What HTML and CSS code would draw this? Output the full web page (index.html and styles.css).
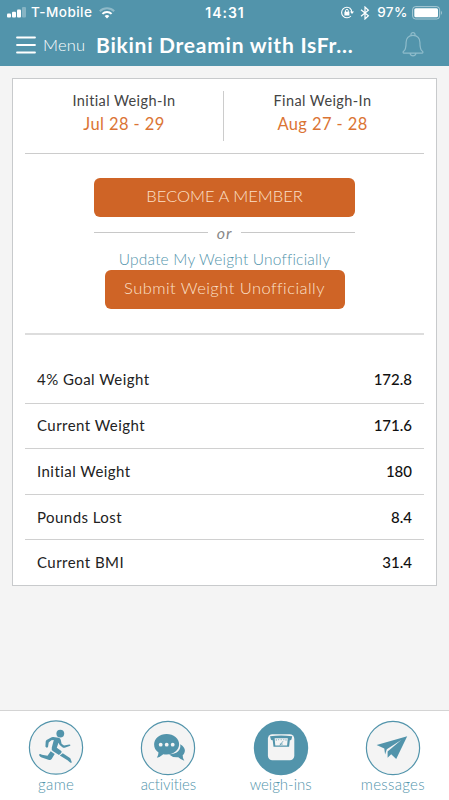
FILE: index.html
```html
<!DOCTYPE html>
<html lang="en">
<head>
<meta charset="utf-8">
<title>Weigh-ins</title>
<link rel="stylesheet" href="styles.css">
</head>
<body>
<header class="header">
  <div class="status">
    <div class="status-left">
      <svg class="signal" width="20" height="11" viewBox="0 0 20 11" fill="#fff"><rect x="0" y="6.5" width="4" height="4" rx="1"/><rect x="5" y="4.8" width="4" height="5.7" rx="1"/><rect x="10" y="2.5" width="4" height="8" rx="1"/><rect x="15" y="0" width="4" height="10.5" rx="1" opacity=".3"/></svg>
      <span class="carrier">T-Mobile</span>
      <svg class="wifi" width="16" height="12" viewBox="0 0 16 12" fill="none" stroke="#fff" stroke-width="2"><path d="M.8 4.2a10.2 10.2 0 0 1 14.4 0" opacity=".35"/><path d="M3.4 6.900a6.500 6.500 0 0 1 9.200 0"/><path d="M5.600 9.100a3.400 3.400 0 0 1 4.800 0L8 11.500z" fill="#fff" stroke="none"/></svg>
    </div>
    <span class="clock">14:31</span>
    <div class="status-right">
      <svg class="lock" width="14" height="13" viewBox="0 0 14 13" fill="none" stroke="#fff"><path d="M10.700 2.800a5.300 5.300 0 1 0 .2 7.200M9.700 2A5.300 5.300 0 0 1 11.800 6" stroke-width="1.100"/><path d="M10 5.500h4l-2 2.400z" fill="#fff" stroke="none"/><rect x="4.400" y="5.700" width="5" height="3.800" fill="#fff" stroke="none"/><path d="M5.500 6V4.800a1.400 1.400 0 0 1 2.800 0V6"/></svg>
      <svg class="bluetooth" width="10" height="14" viewBox="0 0 10 14" fill="none" stroke="#fff" stroke-width="1.200"><path d="M1 3.800l7.400 6L5 13V1l3.400 3.200L1 10.200"/></svg>
      <span class="percent">97%</span>
      <svg class="battery" width="31" height="14" viewBox="0 0 31 14"><rect x=".6" y=".6" width="27" height="12.400" rx="3" fill="none" stroke="#fff" opacity=".5"/><rect x="2.300" y="2.300" width="23.700" height="9" rx="1.500" fill="#fff"/><path d="M28.900 4.500q2 2.300 0 4.600z" fill="#fff" opacity=".5"/></svg>
    </div>
  </div>
  <div class="navbar">
    <svg class="burger" width="20" height="18" viewBox="0 0 20 18" stroke="#fff" stroke-width="1.800" stroke-linecap="round"><path d="M1 1.500h18M1 9h18M1 16.500h18"/></svg>
    <span class="menu">Menu</span>
    <h1 class="title">Bikini Dreamin with IsFr...</h1>
    <svg class="bell" width="22" height="26" viewBox="0 0 22 26" fill="none" stroke="#8fbccb" stroke-width="1.200"><path d="M9 3.800V2.600a2 2 0 0 1 4 0v1.200M11 3.400C6.500 3.400 4.100 6.400 4.100 10.200c0 5.500-.5 7.800-2.500 9-.8.6-.7 1.900.4 1.900h18c1.100 0 1.200-1.300.4-1.900-2-1.200-2.500-3.500-2.500-9 0-3.800-2.400-6.800-6.900-6.800zM8 21.400c.8 3.400 5.200 3.400 6 0"/></svg>
  </div>
</header>

<main class="card">
  <section class="dates">
    <div class="date">
      <div class="date-label">Initial Weigh-In</div>
      <div class="date-value">Jul 28 - 29</div>
    </div>
    <div class="date">
      <div class="date-label">Final Weigh-In</div>
      <div class="date-value">Aug 27 - 28</div>
    </div>
  </section>
  <section class="actions">
    <div class="button member">BECOME A MEMBER</div>
    <div class="or"><span>or</span></div>
    <div class="link">Update My Weight Unofficially</div>
    <div class="button submit">Submit Weight Unofficially</div>
  </section>
  <section class="stats">
    <div class="row"><span>4% Goal Weight</span><span class="value">172.8</span></div>
    <div class="row"><span>Current Weight</span><span class="value">171.6</span></div>
    <div class="row"><span>Initial Weight</span><span class="value">180</span></div>
    <div class="row"><span>Pounds Lost</span><span class="value">8.4</span></div>
    <div class="row"><span>Current BMI</span><span class="value">31.4</span></div>
  </section>
</main>

<nav class="tabs">
  <div class="tab game">
    <svg width="56" height="56" viewBox="0 0 56 56"><circle cx="28" cy="27.500" r="26.600" fill="#f4f4f4" stroke="#5294ab" stroke-width="1.200"/><g fill="#5294ab"><circle cx="32.300" cy="13.600" r="3.900"/><path d="M22.700 17.800q1-.9 2.500-.8l5.300.8q2 .5 2.300 2.200l.8 3.700 2.400 1.800 5.300-1q1.400.1 1 1.300l-5.600 1.900q-1.200.3-2.300-.5l-2.700-2.200-1.200-2.200-1.700 5 4.200 2.900q1.300 1 .2 2.300l-2.200 1.900-5.900-3.700q-2-1.300-1.300-3.700l2-7.400-2.400.1-2.700 2.400-.7 4.500q-1.500 1.300-2.600-.5l.3-5q.1-1 .9-1.700z"/><path d="M22.700 31.200l4 2.900-2.900 4.700q-.9 1.500-2.700 1.100l-7.400-2.400q-3.300-1.800-2.400-3.300.9-.8 2.600.5l5.600 1.100zM31.800 35.400l3-2.200 7.500 5.100 1.500 4q-.6.900-1.700.2l-2.600-2.200z"/></g></svg>
    <span class="tab-label">game</span>
  </div>
  <div class="tab activities">
    <svg width="56" height="56" viewBox="0 0 56 56"><circle cx="28" cy="28" r="26.600" fill="#f4f4f4" stroke="#5294ab" stroke-width="1.200"/><path d="M40.200 24.300c7 4 4.700 9.300 2.500 10.900q-.2 2.700 1.600 5.600-3.100-.8-6-3.500-5.600.5-9.200-2.900c7.500-.2 12.300-4.100 11.100-10.100z" fill="#5294ab"/><path d="M26.600 14c7 0 12.500 4.500 12.500 10.300s-5.500 10.300-12.500 10.300q-1.700 0-3.300-.3-3.100 2.800-6.400 3.500 1.500-2.400 1.600-5.300c-3-1.900-4.400-4.900-4.400-8.200C14.100 18.500 19.600 14 26.600 14z" fill="#5294ab"/><g fill="#f4f4f4"><circle cx="20.700" cy="24.700" r="1.900"/><circle cx="26.700" cy="24.700" r="1.900"/><circle cx="32.700" cy="24.700" r="1.900"/></g></svg>
    <span class="tab-label">activities</span>
  </div>
  <div class="tab weigh">
    <svg width="56" height="56" viewBox="0 0 56 56"><circle cx="28" cy="28" r="27.200" fill="#5294ab"/><rect x="14.900" y="14.300" width="26.400" height="26" rx="4.500" fill="#f4f4f4"/><path d="M17 16.300q11-1.400 22.200 0l-.7 3q-.3 1.200-1.700 1l-.7 6.500H20.500l-.8-6.500q-1.500.2-1.900-1z" fill="#5294ab"/><path d="M21.600 18.200h13.200l-.7 7.400H22.300z" fill="#f4f4f4"/><path d="M23.300 19.200v1.500M25.600 19.200v1M28.200 19.200v1M30.800 19.200v1M33 19.200v1.500M26.800 25.400l3.200-4.200M26.800 24.100h3" stroke="#5294ab" stroke-width=".7"/></svg>
    <span class="tab-label">weigh-ins</span>
  </div>
  <div class="tab messages">
    <svg width="56" height="56" viewBox="0 0 56 56"><circle cx="28" cy="28" r="26.600" fill="#f4f4f4" stroke="#5294ab" stroke-width="1.200"/><path d="M42.200 16.200L11.600 24.900l7.700 3.500.8 6.200 1.700-5.300L36.200 20 22.600 31.600v6.100l3.600-3.400 5 4.800z" fill="#5294ab"/></svg>
    <span class="tab-label">messages</span>
  </div>
</nav>
</body>
</html>
```

FILE: styles.css
```css
* { box-sizing: border-box; }

body {
  margin: 0;
  height: 800px;
  display: flex;
  flex-direction: column;
  background: #f4f4f4;
  font-family: Lato, sans-serif;
  font-weight: 400;
  font-variant-ligatures: none;
  color: #222;
  overflow: hidden;
  white-space: nowrap;
}

svg { display: block; flex: none; }

.header {
  height: 66px;
  background: #5294ab;
  color: #fff;
}

.status {
  height: 25px;
  padding: 0 6px 0 7px;
  display: grid;
  grid-template-columns: 1fr auto 1fr;
  align-items: center;
  font: 500 13.5px/25px Inter, sans-serif;
}

.status-left, .status-right { display: flex; align-items: center; }
.status-right { justify-content: flex-end; }
.carrier { margin-left: 4px; letter-spacing: .45px; }
.wifi { margin-left: 7px; }
.clock { font-weight: 600; font-size: 14px; letter-spacing: 1px; }
.bluetooth { margin-left: 6px; }
.percent { margin: 0 4px 0 7px; letter-spacing: .5px; }

.navbar {
  height: 41px;
  padding: 0 25px 2px 16px;
  display: flex;
  align-items: center;
}

.menu { margin-left: 7px; width: 53px; font-size: 16.5px; letter-spacing: .2px; font-weight: 300; }
.title { margin: 0; font-size: 21px; line-height: 30px; font-weight: 700; letter-spacing: .75px; }
.bell { margin-left: auto; }

.card {
  height: 508px;
  margin: 12px 12px 0;
  padding: 0 12px;
  border: 1px solid #c8cacc;
  background: #fff;
}

.dates {
  height: 75px;
  padding: 12px 0;
  display: grid;
  grid-template-columns: 198px 1fr;
  border-bottom: 1px solid #ccc;
  text-align: center;
}

.date + .date { padding-right: 3px; border-left: 1px solid #ccc; }
.date-label { font-size: 14.5px; line-height: 19px; letter-spacing: .4px; color: #444; }
.date-value { margin-top: 3px; font-size: 16.5px; line-height: 22px; letter-spacing: .4px; color: #db7434; }

.actions {
  height: 181px;
  padding-top: 24px;
  display: flex;
  flex-direction: column;
  align-items: center;
  border-bottom: 2px solid #ddd;
}

.button {
  height: 39px;
  border-radius: 6px;
  background: #cf6426;
  color: #fbe0ca;
  font-weight: 300;
  font-size: 16.5px;
  line-height: 36px;
  text-align: center;
}

.member { width: 261px; }
.submit { width: 240px; letter-spacing: .45px; }

.or {
  width: 261px;
  height: 32px;
  padding-bottom: 1px;
  display: flex;
  align-items: center;
  gap: 9px;
  color: #888;
  font: italic 16px/20px Lato, sans-serif;
  letter-spacing: .8px;
}

.or::before, .or::after { content: ""; flex: 1; height: 1px; background: #c8c8c8; }
.link { height: 21px; line-height: 20px; font-size: 15.5px; letter-spacing: .2px; font-weight: 300; color: #5294ab; }

.stats { padding-top: 22px; }
.row {
  height: 45.6px;
  padding: 0 12px 1px;
  display: flex;
  align-items: center;
  justify-content: space-between;
  font-size: 15px;
  letter-spacing: .45px;
}
.row + .row { border-top: 1px solid #d0d0d0; }
.value { color: #111; font-weight: 500; letter-spacing: 0; }

.tabs {
  height: 90px;
  margin-top: auto;
  padding-top: 9px;
  display: grid;
  grid-template-columns: repeat(4, 112.25px);
  border-top: 1px solid #d4d4d4;
  background: #fff;
}
.tab { display: flex; flex-direction: column; align-items: center; }
.tab-label { font-size: 15px; font-weight: 300; line-height: 17px; color: #5294ab; }
.game .tab-label, .messages .tab-label { letter-spacing: .3px; }
.activities .tab-label { letter-spacing: -.1px; }
```
